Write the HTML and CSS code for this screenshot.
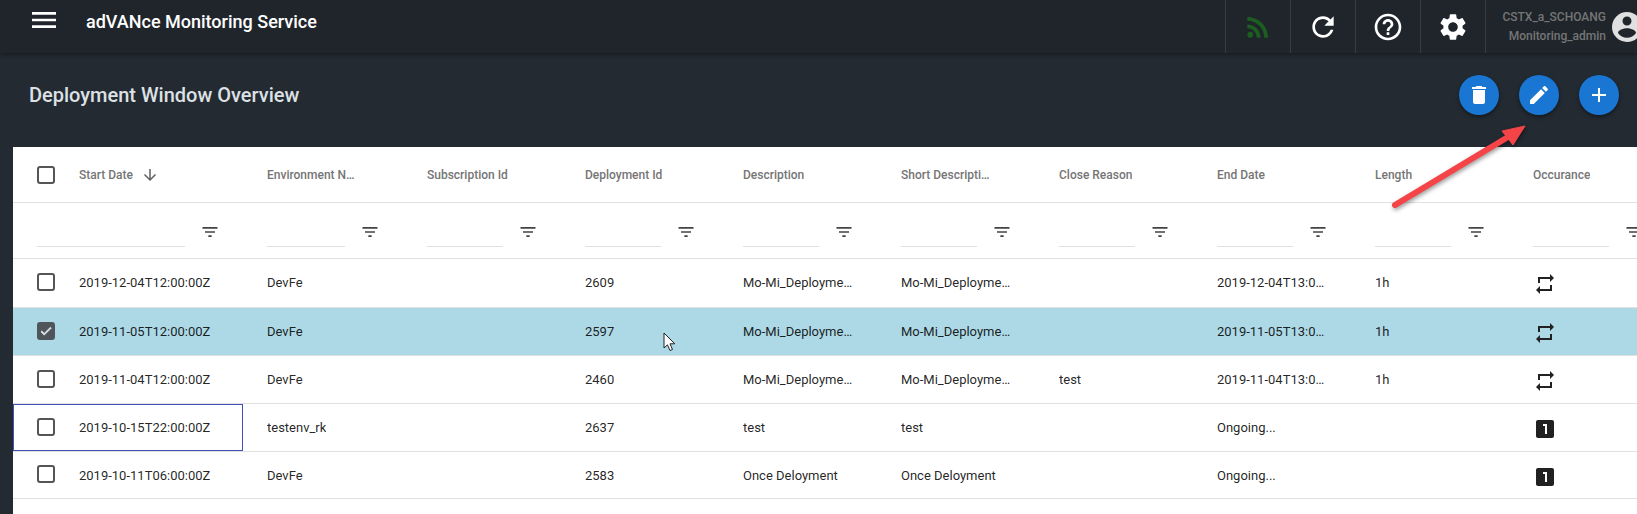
FILE: index.html
```html
<!DOCTYPE html>
<html lang="en">

<head>
    <meta charset="UTF-8">
    <meta name="viewport" content="width=device-width, initial-scale=1.0">
    <title>adVANce Monitoring Service</title>
    <link rel="stylesheet" href="styles.css">
</head>

<body>
    <header class="topbar">
        <svg class="menu-icon" viewBox="0 0 24 24"><path d="M3 18h18v-2H3v2zm0-5h18v-2H3v2zm0-7v2h18V6H3z"/></svg>
        <div class="app-title">adVANce Monitoring Service</div>
        <div class="bar-cell">
            <svg class="bar-icon rss" viewBox="0 0 24 24"><circle cx="6.18" cy="17.82" r="2.18"/><path d="M4 4.44v2.83c7.03 0 12.73 5.7 12.73 12.73h2.83c0-8.59-6.97-15.56-15.56-15.56zm0 5.66v2.83c3.9 0 7.07 3.17 7.07 7.07h2.83c0-5.47-4.43-9.9-9.9-9.9z"/></svg>
        </div>
        <div class="bar-cell">
            <svg class="bar-icon" viewBox="0 0 24 24"><path d="M17.65 6.35C16.2 4.9 14.21 4 12 4c-4.42 0-7.99 3.58-7.99 8s3.57 8 7.99 8c3.73 0 6.84-2.55 7.73-6h-2.08c-.82 2.33-3.04 4-5.65 4-3.31 0-6-2.69-6-6s2.69-6 6-6c1.66 0 3.14.69 4.22 1.78L13 11h7V4l-2.35 2.35z"/></svg>
        </div>
        <div class="bar-cell">
            <svg class="bar-icon" viewBox="0 0 24 24"><path d="M11 18h2v-2h-2v2zm1-16C6.48 2 2 6.48 2 12s4.48 10 10 10 10-4.48 10-10S17.52 2 12 2zm0 18c-4.41 0-8-3.59-8-8s3.59-8 8-8 8 3.59 8 8-3.59 8-8 8zm0-14c-2.21 0-4 1.79-4 4h2c0-1.1.9-2 2-2s2 .9 2 2c0 2-3 1.75-3 5h2c0-2.25 3-2.5 3-5 0-2.21-1.79-4-4-4z"/></svg>
        </div>
        <div class="bar-cell">
            <svg class="bar-icon" viewBox="0 0 24 24"><path d="M19.14 12.94c.04-.3.06-.61.06-.94 0-.32-.02-.64-.07-.94l2.03-1.58c.18-.14.23-.41.12-.61l-1.92-3.32c-.12-.22-.37-.29-.59-.22l-2.39.96c-.5-.38-1.03-.7-1.62-.94l-.36-2.54c-.04-.24-.24-.41-.48-.41h-3.84c-.24 0-.43.17-.47.41l-.36 2.54c-.59.24-1.13.57-1.62.94l-2.39-.96c-.22-.08-.47 0-.59.22L2.74 8.87c-.12.21-.08.47.12.61l2.03 1.58c-.05.3-.09.63-.09.94s.02.64.07.94l-2.03 1.58c-.18.14-.23.41-.12.61l1.92 3.32c.12.22.37.29.59.22l2.39-.96c.5.38 1.03.7 1.62.94l.36 2.54c.05.24.24.41.48.41h3.84c.24 0 .44-.17.47-.41l.36-2.54c.59-.24 1.13-.56 1.62-.94l2.39.96c.22.08.47 0 .59-.22l1.92-3.32c.12-.22.07-.47-.12-.61l-2.01-1.58zM12 15.6c-1.98 0-3.6-1.62-3.6-3.6s1.62-3.6 3.6-3.6 3.6 1.62 3.6 3.6-1.62 3.6-3.6 3.6z"/></svg>
        </div>
        <div class="user-cell">
            <div class="user-text">
                <div>CSTX_a_SCHOANG</div>
                <div>Monitoring_admin</div>
            </div>
            <svg class="avatar" viewBox="0 0 24 24"><circle class="avatar-bg" cx="12" cy="12" r="10"/><path d="M12 5c1.66 0 3 1.34 3 3s-1.34 3-3 3-3-1.34-3-3 1.34-3 3-3zm0 14.2c-2.5 0-4.71-1.28-6-3.22.03-1.99 4-3.08 6-3.08 1.99 0 5.97 1.09 6 3.08-1.29 1.94-3.5 3.22-6 3.22z"/></svg>
        </div>
    </header>

    <div class="page-head">
        <h1 class="page-title">Deployment Window Overview</h1>
        <div class="fab-group">
            <button class="fab"><svg viewBox="0 0 24 24"><path d="M6 19c0 1.1.9 2 2 2h8c1.1 0 2-.9 2-2V7H6v12zM19 4h-3.5l-1-1h-5l-1 1H5v2h14V4z"/></svg></button>
            <button class="fab"><svg viewBox="0 0 24 24"><path d="M3 17.25V21h3.75L17.81 9.94l-3.75-3.75L3 17.25zM20.71 7.04c.39-.39.39-1.02 0-1.41l-2.34-2.34c-.39-.39-1.02-.39-1.41 0l-1.83 1.83 3.75 3.75 1.83-1.83z"/></svg></button>
            <button class="fab"><svg viewBox="0 0 24 24"><path d="M19 13h-6v6h-2v-6H5v-2h6V5h2v6h6v2z"/></svg></button>
        </div>
    </div>

    <div class="table-wrap">
        <div class="row head-row">
            <div class="cell first"><span class="check"></span><span class="head-text">Start Date</span><svg class="sort-icon" viewBox="0 0 24 24"><path d="M20 12l-1.41-1.41L13 16.17V4h-2v12.17l-5.58-5.6L4 12l8 8 8-8z"/></svg></div>
            <div class="cell"><span class="head-text">Environment Name</span></div>
            <div class="cell"><span class="head-text">Subscription Id</span></div>
            <div class="cell"><span class="head-text">Deployment Id</span></div>
            <div class="cell"><span class="head-text">Description</span></div>
            <div class="cell"><span class="head-text">Short Description</span></div>
            <div class="cell"><span class="head-text">Close Reason</span></div>
            <div class="cell"><span class="head-text">End Date</span></div>
            <div class="cell"><span class="head-text">Length</span></div>
            <div class="cell"><span class="head-text">Occurance</span></div>
        </div>

        <div class="row filter-row">
            <div class="cell"><span class="filter-input"></span><svg class="filter-icon" viewBox="0 0 24 24"><path d="M10 18h4v-2h-4v2zM3 6v2h18V6H3zm3 7h12v-2H6v2z"/></svg></div>
            <div class="cell"><span class="filter-input"></span><svg class="filter-icon" viewBox="0 0 24 24"><path d="M10 18h4v-2h-4v2zM3 6v2h18V6H3zm3 7h12v-2H6v2z"/></svg></div>
            <div class="cell"><span class="filter-input"></span><svg class="filter-icon" viewBox="0 0 24 24"><path d="M10 18h4v-2h-4v2zM3 6v2h18V6H3zm3 7h12v-2H6v2z"/></svg></div>
            <div class="cell"><span class="filter-input"></span><svg class="filter-icon" viewBox="0 0 24 24"><path d="M10 18h4v-2h-4v2zM3 6v2h18V6H3zm3 7h12v-2H6v2z"/></svg></div>
            <div class="cell"><span class="filter-input"></span><svg class="filter-icon" viewBox="0 0 24 24"><path d="M10 18h4v-2h-4v2zM3 6v2h18V6H3zm3 7h12v-2H6v2z"/></svg></div>
            <div class="cell"><span class="filter-input"></span><svg class="filter-icon" viewBox="0 0 24 24"><path d="M10 18h4v-2h-4v2zM3 6v2h18V6H3zm3 7h12v-2H6v2z"/></svg></div>
            <div class="cell"><span class="filter-input"></span><svg class="filter-icon" viewBox="0 0 24 24"><path d="M10 18h4v-2h-4v2zM3 6v2h18V6H3zm3 7h12v-2H6v2z"/></svg></div>
            <div class="cell"><span class="filter-input"></span><svg class="filter-icon" viewBox="0 0 24 24"><path d="M10 18h4v-2h-4v2zM3 6v2h18V6H3zm3 7h12v-2H6v2z"/></svg></div>
            <div class="cell"><span class="filter-input"></span><svg class="filter-icon" viewBox="0 0 24 24"><path d="M10 18h4v-2h-4v2zM3 6v2h18V6H3zm3 7h12v-2H6v2z"/></svg></div>
            <div class="cell"><span class="filter-input"></span><svg class="filter-icon" viewBox="0 0 24 24"><path d="M10 18h4v-2h-4v2zM3 6v2h18V6H3zm3 7h12v-2H6v2z"/></svg></div>
        </div>

        <div class="row data-row">
            <div class="cell first"><span class="check"></span><span class="text">2019-12-04T12:00:00Z</span></div>
            <div class="cell"><span class="text">DevFe</span></div>
            <div class="cell"></div>
            <div class="cell"><span class="text">2609</span></div>
            <div class="cell"><span class="text">Mo-Mi_Deployment</span></div>
            <div class="cell"><span class="text">Mo-Mi_Deployment</span></div>
            <div class="cell"></div>
            <div class="cell"><span class="text">2019-12-04T13:00:00Z</span></div>
            <div class="cell"><span class="text">1h</span></div>
            <div class="cell"><svg class="occ-icon" viewBox="0 0 24 24"><path d="M7 7h10v3l4-4-4-4v3H5v6h2V7zm10 10H7v-3l-4 4 4 4v-3h12v-6h-2v4z"/></svg></div>
        </div>

        <div class="row data-row selected">
            <div class="cell first"><span class="check checked"><svg viewBox="0 0 24 24"><path d="M9 16.2L4.8 12l-1.4 1.4L9 19 21 7l-1.4-1.4z"/></svg></span><span class="text">2019-11-05T12:00:00Z</span></div>
            <div class="cell"><span class="text">DevFe</span></div>
            <div class="cell"></div>
            <div class="cell"><span class="text">2597</span></div>
            <div class="cell"><span class="text">Mo-Mi_Deployment</span></div>
            <div class="cell"><span class="text">Mo-Mi_Deployment</span></div>
            <div class="cell"></div>
            <div class="cell"><span class="text">2019-11-05T13:00:00Z</span></div>
            <div class="cell"><span class="text">1h</span></div>
            <div class="cell"><svg class="occ-icon" viewBox="0 0 24 24"><path d="M7 7h10v3l4-4-4-4v3H5v6h2V7zm10 10H7v-3l-4 4 4 4v-3h12v-6h-2v4z"/></svg></div>
        </div>

        <div class="row data-row">
            <div class="cell first"><span class="check"></span><span class="text">2019-11-04T12:00:00Z</span></div>
            <div class="cell"><span class="text">DevFe</span></div>
            <div class="cell"></div>
            <div class="cell"><span class="text">2460</span></div>
            <div class="cell"><span class="text">Mo-Mi_Deployment</span></div>
            <div class="cell"><span class="text">Mo-Mi_Deployment</span></div>
            <div class="cell"><span class="text">test</span></div>
            <div class="cell"><span class="text">2019-11-04T13:00:00Z</span></div>
            <div class="cell"><span class="text">1h</span></div>
            <div class="cell"><svg class="occ-icon" viewBox="0 0 24 24"><path d="M7 7h10v3l4-4-4-4v3H5v6h2V7zm10 10H7v-3l-4 4 4 4v-3h12v-6h-2v4z"/></svg></div>
        </div>

        <div class="row data-row">
            <div class="cell first focused"><span class="check"></span><span class="text">2019-10-15T22:00:00Z</span></div>
            <div class="cell"><span class="text">testenv_rk</span></div>
            <div class="cell"></div>
            <div class="cell"><span class="text">2637</span></div>
            <div class="cell"><span class="text">test</span></div>
            <div class="cell"><span class="text">test</span></div>
            <div class="cell"></div>
            <div class="cell"><span class="text">Ongoing...</span></div>
            <div class="cell"></div>
            <div class="cell"><svg class="occ-icon" viewBox="0 0 24 24"><path d="M19 3H5c-1.1 0-2 .9-2 2v14c0 1.1.9 2 2 2h14c1.1 0 2-.9 2-2V5c0-1.1-.9-2-2-2zm-5 14h-2V9h-2V7h4v10z"/></svg></div>
        </div>

        <div class="row data-row">
            <div class="cell first"><span class="check"></span><span class="text">2019-10-11T06:00:00Z</span></div>
            <div class="cell"><span class="text">DevFe</span></div>
            <div class="cell"></div>
            <div class="cell"><span class="text">2583</span></div>
            <div class="cell"><span class="text">Once Deloyment</span></div>
            <div class="cell"><span class="text">Once Deloyment</span></div>
            <div class="cell"></div>
            <div class="cell"><span class="text">Ongoing...</span></div>
            <div class="cell"></div>
            <div class="cell"><svg class="occ-icon" viewBox="0 0 24 24"><path d="M19 3H5c-1.1 0-2 .9-2 2v14c0 1.1.9 2 2 2h14c1.1 0 2-.9 2-2V5c0-1.1-.9-2-2-2zm-5 14h-2V9h-2V7h4v10z"/></svg></div>
        </div>
    </div>

    <!-- annotation drawn on top of the screenshot -->
    <svg class="red-arrow" viewBox="0 0 160 100">
        <line x1="15" y1="90" x2="128" y2="22" stroke="#f44448" stroke-width="6" stroke-linecap="round"/>
        <polygon points="145,11 122,16 133,30" fill="#f44448" stroke="#f44448" stroke-width="1" stroke-linejoin="round"/>
    </svg>

    <svg class="mouse-cursor" viewBox="0 0 13 20">
        <path d="M1 1V16L4.5 12.8L7 18.5L9.5 17.5L7 11.8H11.8Z" fill="#fff" stroke="#222" stroke-width="1"/>
    </svg>
</body>

</html>
```

FILE: styles.css
```css
* {
    box-sizing: border-box;
}

html,
body {
    height: 100%;
}

body {
    font-family: Roboto, "Liberation Sans", sans-serif;
    background-color: #232a32;
    margin: 0;
    overflow: hidden;
    position: relative;
}

/* top bar */
.topbar {
    display: flex;
    align-items: stretch;
    height: 53px;
    background-color: #1f252b;
    box-shadow: 0 2px 4px rgba(0, 0, 0, 0.35);
    position: relative;
}

.menu-icon {
    width: 32px;
    height: 32px;
    margin: 4px 0 0 28px;
    fill: #fff;
    flex-shrink: 0;
}

.app-title {
    flex: 1;
    margin: 12px 0 0 26px;
    color: #fff;
    font-size: 18px;
    font-weight: 500;
    line-height: 20px;
}

.bar-cell {
    width: 65px;
    display: flex;
    align-items: center;
    justify-content: center;
    border-left: 1px solid #353c44;
}

.bar-icon {
    width: 32px;
    height: 32px;
    fill: #fff;
}

.bar-icon.rss {
    fill: #1b5e20;
}

.user-cell {
    width: 152px;
    display: flex;
    align-items: center;
    justify-content: flex-end;
    gap: 3px;
    border-left: 1px solid #353c44;
    overflow: hidden;
}

.user-text {
    color: #757575;
    font-size: 12px;
    font-weight: 500;
    line-height: 19px;
    text-align: right;
    white-space: nowrap;
}

.avatar {
    width: 36px;
    height: 36px;
    margin-right: -8px;
    fill: #1f252b;
    flex-shrink: 0;
}

.avatar-bg {
    fill: #e0e0e0;
}

/* page heading */
.page-head {
    display: flex;
    align-items: center;
    justify-content: space-between;
    height: 94px;
    padding: 0 18px 10px 29px;
}

.page-title {
    margin: 0;
    color: #dde1e5;
    font-size: 20px;
    font-weight: 500;
}

.fab-group {
    display: flex;
    gap: 20px;
}

.fab {
    width: 40px;
    height: 40px;
    padding: 8px;
    border: none;
    border-radius: 50%;
    background-color: #1976d2;
    box-shadow: 0 2px 4px rgba(0, 0, 0, 0.4);
}

.fab svg {
    display: block;
    width: 24px;
    height: 24px;
    fill: #fff;
}

/* table */
.table-wrap {
    margin-left: 13px;
    width: 1654px;
    height: 367px;
    background-color: #fff;
}

.row {
    display: grid;
    grid-template-columns: 230px 160px repeat(8, 158px);
    border-bottom: 1px solid #e0e0e0;
}

.head-row {
    height: 56px;
}

.filter-row {
    height: 56px;
}

.data-row {
    height: 48px;
}

.data-row:nth-child(3) {
    height: 49px;
    padding-bottom: 2px;
}

.data-row:last-child {
    height: 47px;
}

.selected {
    background-color: #add8e6;
}

.cell {
    display: flex;
    align-items: center;
    min-width: 0;
    padding: 0 24px;
}

.focused {
    outline: 1px solid #3f51b5;
    outline-offset: -1px;
}

.head-text {
    max-width: 90px;
    overflow: hidden;
    color: #757575;
    font-size: 12px;
    font-weight: 500;
    text-overflow: ellipsis;
    white-space: nowrap;
}

.sort-icon {
    width: 18px;
    height: 18px;
    margin-left: 8px;
    fill: #616161;
    flex-shrink: 0;
}

.text {
    overflow: hidden;
    color: rgba(0, 0, 0, 0.87);
    font-size: 13px;
    text-overflow: ellipsis;
    white-space: nowrap;
}

.check {
    width: 18px;
    height: 18px;
    margin-right: 24px;
    border: 2px solid #555;
    border-radius: 3px;
    flex-shrink: 0;
}

.data-row .check {
    margin-top: -2px;
}

.data-row:nth-child(3) .check {
    margin-top: 0;
}

.check.checked {
    background-color: #50555b;
    border-color: #50555b;
}

.check.checked svg {
    display: block;
    width: 14px;
    height: 14px;
    fill: #dfe8ec;
    stroke: #dfe8ec;
    stroke-width: 1.5;
}

.filter-row .cell {
    padding-right: 0;
    padding-left: 24px;
}

.filter-input {
    width: calc(100% - 58px);
    height: 1px;
    margin-top: 32px;
    background-color: #e0e0e0;
}

.filter-icon {
    width: 20px;
    height: 20px;
    margin: 3px 0 0 15px;
    fill: #444;
    flex-shrink: 0;
}

.occ-icon {
    width: 24px;
    height: 24px;
    margin: 3px 0 0 0;
    fill: #212121;
    flex-shrink: 0;
}

/* overlays */
.red-arrow {
    position: absolute;
    left: 1380px;
    top: 115px;
    width: 160px;
    height: 100px;
    filter: drop-shadow(1px 2px 2px rgba(0, 0, 0, 0.4));
}

.mouse-cursor {
    position: absolute;
    left: 663px;
    top: 332px;
    width: 13px;
    height: 20px;
}
```
